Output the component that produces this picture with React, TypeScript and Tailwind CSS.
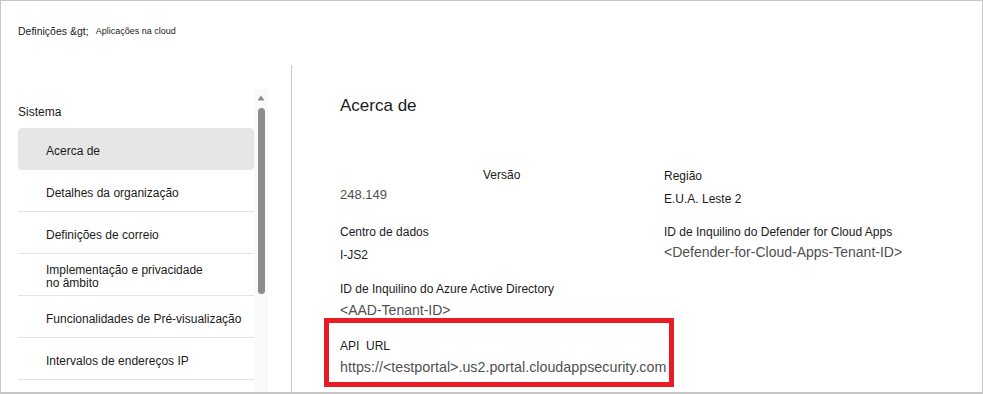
const navItems = [
  { label: 'Acerca de', active: true },
  { label: 'Detalhes da organização' },
  { label: 'Definições de correio' },
  { label: 'Implementação e privacidade\nno âmbito' },
  { label: 'Funcionalidades de Pré-visualização' },
  { label: 'Intervalos de endereços IP' },
];

function Field({
  label,
  value,
  labelClass = '',
  valueClass = '',
}: {
  label: string;
  value: string;
  labelClass?: string;
  valueClass?: string;
}) {
  return (
    <div className="flex flex-col">
      <div className={`text-[12px] leading-4 text-[#1b1b1b] ${labelClass}`}>{label}</div>
      <div className={valueClass}>{value}</div>
    </div>
  );
}

export default function App() {
  return (
    <div
      className="flex h-[394px] w-[983px] flex-col overflow-hidden border border-b-2 border-[#c6c6c6] bg-white text-[#1b1b1b]"
      style={{ fontFamily: '"Liberation Sans", Arial, sans-serif' }}
    >
      {/* Breadcrumb */}
      <div className="flex h-[64px] shrink-0 items-start gap-[7px] pl-[17px] pt-[22px]">
        <span className="text-[10.5px] leading-4">Definições &amp;gt;</span>
        <span className="text-[9px] leading-4">Aplicações na cloud</span>
      </div>

      <div className="flex min-h-0 flex-1">
        {/* Sidebar */}
        <aside className="flex w-[291px] shrink-0 border-r border-[#c8c8c8] pl-[17px]">
          <div className="w-[236px] shrink-0 pt-[39px]">
            <div className="text-[12px] leading-4">Sistema</div>
            <ul className="mt-[8px]">
              {navItems.map((item) => (
                <li
                  key={item.label}
                  className={`flex h-[42px] items-center whitespace-pre-line pl-[28px] pt-[5px] text-[12px] leading-[13px] ${
                    item.active
                      ? 'rounded-sm bg-[#e6e6e6]'
                      : 'border-b border-[#e3e3e3]'
                  }`}
                >
                  {item.label}
                </li>
              ))}
              <li className="h-[42px]" />
            </ul>
          </div>
          {/* Scrollbar */}
          <div className="mt-[24px] flex w-[14px] shrink-0 flex-col items-center bg-[#f9f9f9] pt-[6px]">
            <svg width="8" height="6" viewBox="0 0 8 6">
              <path d="M4 0.5 L7.5 5.5 L0.5 5.5 Z" fill="#8a8a8a" />
            </svg>
            <div className="mt-[7px] h-[186px] w-[7px] rounded-full bg-[#8c8c8c]" />
          </div>
        </aside>

        {/* Main */}
        <main className="flex-1 pl-[48px] pt-[31px]">
          <h1 className="text-[17px] font-normal leading-5 text-[#1b1b1b]">Acerca de</h1>

          <div className="mt-[51px] grid grid-cols-[324px_1fr]">
            {/* Row 1 */}
            <div className="h-[57px]">
              <Field
                label="Versão"
                value="248.149"
                labelClass="pl-[143px]"
                valueClass="mt-[3px] text-[13px] leading-[18px] text-[#505050]"
              />
            </div>
            <div className="h-[57px] pt-px">
              <Field
                label="Região"
                value="E.U.A. Leste 2"
                valueClass="mt-[7px] text-[12px] leading-4 text-[#1b1b1b]"
              />
            </div>

            {/* Row 2 */}
            <div className="h-[57px]">
              <Field
                label="Centro de dados"
                value="I-JS2"
                valueClass="mt-[7px] text-[12px] leading-4 text-[#1b1b1b]"
              />
            </div>
            <div className="h-[57px]">
              <Field
                label="ID de Inquilino do Defender for Cloud Apps"
                value="<Defender-for-Cloud-Apps-Tenant-ID>"
                valueClass="mt-[2px] text-[14px] leading-5 text-[#505050]"
              />
            </div>

            {/* Row 3 */}
            <div className="h-[57px]">
              <Field
                label="ID de Inquilino do Azure Active Directory"
                value="<AAD-Tenant-ID>"
                valueClass="mt-[3px] text-[14px] leading-5 text-[#505050]"
              />
            </div>
            <div className="h-[57px]" />

            {/* Row 4 */}
            <div className="relative h-[57px]">
              <Field
                label="API  URL"
                value="https://<testportal>.us2.portal.cloudappsecurity.com"
                labelClass="whitespace-pre"
                valueClass="mt-[3px] whitespace-nowrap text-[14.3px] leading-5 text-[#505050]"
              />
              <div className="pointer-events-none absolute left-[-16px] top-[-20px] h-[69px] w-[350px] border-[5px] border-[#e81c24]" />
            </div>
            <div className="h-[57px]" />
          </div>
        </main>
      </div>
    </div>
  );
}
